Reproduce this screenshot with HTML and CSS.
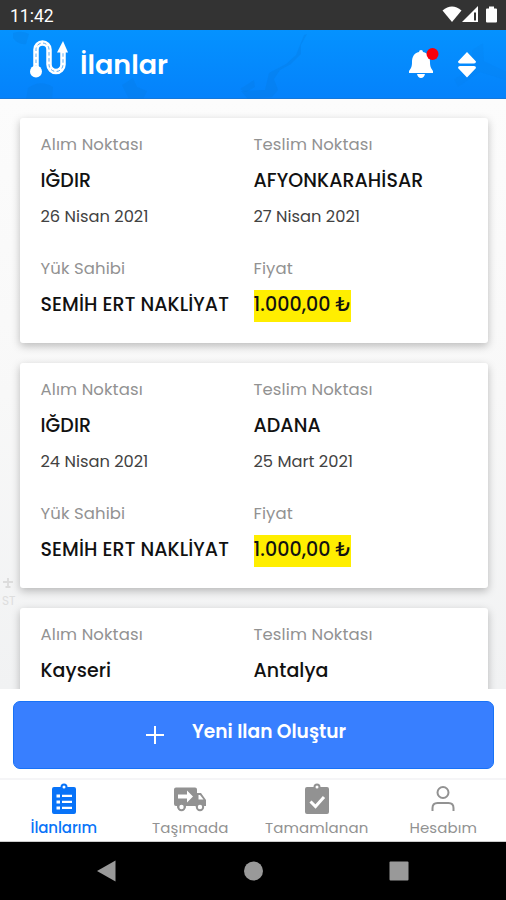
FILE: index.html
```html
<!DOCTYPE html>
<html lang="tr">
<head>
<meta charset="utf-8">
<title>İlanlar</title>
<link rel="stylesheet" href="styles.css">
</head>
<body>
<div class="app">
  <div class="status">
    <span class="clock">11:42</span>
    <svg class="status-icons" width="58" height="20" viewBox="0 0 58 20" fill="#fff">
      <path d="M0.500 5.500Q10 -2.500 19.500 5.500L10 17Z"/>
      <path fill-rule="evenodd" d="M20 17L36 1V17ZM32 7.500V15.500H34V7.500Z"/>
      <path d="M45 3.500h2V1.500h5v2h2q1 0 1 1V16.500q0 1-1 1H45q-1 0-1-1V4.500q0-1 1-1Z"/>
    </svg>
  </div>
  <header class="header">
    <svg class="header-map" width="506" height="69" viewBox="0 0 506 69" fill="#0878dc" stroke="none">
      <path opacity=".25" d="M13 3Q22 0 29 4L26 14Q18 15 13 8ZM28 58Q40 49 53 57L52 69H26ZM122 55L133 48L137 57L147 61L143 69H129ZM240 59L254 50L255 57L246 62Z"/>
      <path opacity=".28" d="M304 5L307 4L301 15V24L291 34L280 40L274 49L278 60L272 67L248 69L241 61L265 60L269 43L286 34L296 25Z"/>
      <path opacity=".1" d="M472 20L483 13L484 31L506 42V50L480 42L458 57L454 49L472 39Z"/>
    </svg>
    <svg class="logo" width="40" height="40" viewBox="0 0 40 40" fill="none">
      <path d="M7 31V11.500A6.500 6.500 0 0 1 20 11.500V26.500A6.500 6.500 0 0 0 34 26.500V13" stroke="#fff" stroke-width="5.500"/>
      <path d="M7 31V11.500A6.500 6.500 0 0 1 20 11.500V26.500A6.500 6.500 0 0 0 34 26.500V13" stroke="#4aa4f5" stroke-width=".9" stroke-dasharray="3.500 2.500"/>
      <circle cx="7" cy="33.500" r="6" fill="#fff"/>
      <path d="M34 3L39 14.500H28Z" fill="#fff"/>
    </svg>
    <h1 class="title">İlanlar</h1>
    <svg class="bell" width="30" height="32" viewBox="0 0 30 32">
      <path fill="#fff" d="M12 1a2 2 0 0 1 2 2c5 1 7 5 7 10 0 5 1 6 3 9v2H0v-2c2-3 3-4 3-9 0-5 2-9 7-10a2 2 0 0 1 2-2ZM8 25h8q-1 4-4 4t-4-4Z"/>
      <circle cx="23.500" cy="5" r="6" fill="#f8000a"/>
    </svg>
    <svg class="sort" width="18" height="26" viewBox="0 0 18 26" fill="#fff">
      <path d="M9 0L18 9.500Q18 11.500 16 11.500H2Q0 11.500 0 9.500ZM9 25.500L0 16Q0 14 2 14H16Q18 14 18 16Z"/>
    </svg>
  </header>
  <main class="list">
    <article class="card">
      <section class="cell"><p class="label">Alım Noktası</p><p class="value">IĞDIR</p><p class="date">26 Nisan 2021</p></section>
      <section class="cell"><p class="label">Teslim Noktası</p><p class="value">AFYONKARAHİSAR</p><p class="date">27 Nisan 2021</p></section>
      <section class="cell"><p class="label">Yük Sahibi</p><p class="value">SEMİH ERT NAKLİYAT</p></section>
      <section class="cell"><p class="label">Fiyat</p><p class="value price">1.000,00 ₺</p></section>
    </article>
    <article class="card">
      <section class="cell"><p class="label">Alım Noktası</p><p class="value">IĞDIR</p><p class="date">24 Nisan 2021</p></section>
      <section class="cell"><p class="label">Teslim Noktası</p><p class="value">ADANA</p><p class="date">25 Mart 2021</p></section>
      <section class="cell"><p class="label">Yük Sahibi</p><p class="value">SEMİH ERT NAKLİYAT</p></section>
      <section class="cell"><p class="label">Fiyat</p><p class="value price">1.000,00 ₺</p></section>
    </article>
    <article class="card">
      <section class="cell"><p class="label">Alım Noktası</p><p class="value">Kayseri</p></section>
      <section class="cell"><p class="label">Teslim Noktası</p><p class="value">Antalya</p></section>
    </article>
    <div class="map-label"><svg width="12" height="12" viewBox="0 0 12 12"><path d="M6 1V10M1 5H11M3.500 10H8.500" stroke="#dcdcdc" stroke-width="1.800"/></svg><br>ST</div>
  </main>
  <div class="action">
    <button class="create">
      <svg width="18" height="18" viewBox="0 0 18 18" stroke="#fff" stroke-width="2"><path d="M9 0V18M0 9H18"/></svg>
      <span>Yeni Ilan Oluştur</span>
    </button>
  </div>
  <nav class="tabs">
    <a class="tab active">
      <svg width="24" height="32" viewBox="0 0 24 32"><path fill="currentColor" fill-rule="evenodd" d="M2 4H8.500A3.500 3.500 0 0 1 15.500 4H22Q24 4 24 6V29Q24 31 22 31H2Q0 31 0 29V6Q0 4 2 4ZM12 2.500A1.500 1.500 0 1 0 12 5.500A1.500 1.500 0 1 0 12 2.500ZM4.500 11.500V14.500H8V11.500ZM10 11.700V14H20V11.700ZM4.500 17.500V20.500H8V17.500ZM10 17.700V20H20V17.700ZM4.500 23.500V26.500H8V23.500ZM10 23.700V26H20V23.700Z"/></svg>
      <span>İlanlarım</span>
    </a>
    <a class="tab">
      <svg width="32" height="32" viewBox="0 0 32 32"><path fill="currentColor" fill-rule="evenodd" d="M2 4.500H21Q23 4.500 23 6.500V10H27L32 17V23H30A4.500 4.500 0 0 1 21.500 23H12A4.500 4.500 0 0 1 3 23H2Q0 23 0 21V6.500Q0 4.500 2 4.500ZM4 11.500V15.500H13V19.500L19 13.500L13 7.500V11.500ZM24.500 12V16.500H29.500L26 12Z"/><circle cx="7.500" cy="24" r="3.200" fill="#fff" stroke="currentColor" stroke-width="2"/><circle cx="26" cy="24" r="3.200" fill="#fff" stroke="currentColor" stroke-width="2"/></svg>
      <span>Taşımada</span>
    </a>
    <a class="tab">
      <svg width="24" height="32" viewBox="0 0 24 32"><path fill="currentColor" fill-rule="evenodd" d="M2 4H8.500A3.500 3.500 0 0 1 15.500 4H22Q24 4 24 6V29Q24 31 22 31H2Q0 31 0 29V6Q0 4 2 4ZM12 2.500A1.500 1.500 0 1 0 12 5.500A1.500 1.500 0 1 0 12 2.500Z"/><path d="M5.500 18.500L10.500 23.500L19 14" fill="none" stroke="#fff" stroke-width="3"/></svg>
      <span>Tamamlanan</span>
    </a>
    <a class="tab">
      <svg width="24" height="32" viewBox="0 0 24 32" fill="none" stroke="currentColor" stroke-width="2"><circle cx="12" cy="9.500" r="5.500"/><path d="M1.500 28V25Q1.500 20 6.500 20H17.500Q22.500 20 22.500 25V28"/></svg>
      <span>Hesabım</span>
    </a>
  </nav>
  <div class="system">
    <svg width="20" height="22" viewBox="0 0 20 22"><path fill="#999" d="M0 11L18.500 .5V21.500Z"/></svg>
    <svg width="20" height="22" viewBox="0 0 20 22"><circle cx="10.500" cy="11" r="9.500" fill="#999"/></svg>
    <svg width="20" height="22" viewBox="0 0 20 22"><rect x=".5" y="1.500" width="19" height="19" rx="1" fill="#999"/></svg>
  </div>
</div>
</body>
</html>
```
FILE: styles.css
```css
* { box-sizing: border-box; margin: 0; padding: 0; }
body { font-family: Poppins, Inter, "Noto Sans", sans-serif; background: #fff; }
.app { width: 506px; height: 900px; display: flex; flex-direction: column; overflow: hidden; }
.app > * { flex-shrink: 0; }
.status { height: 30px; background: #333; display: flex; justify-content: space-between; align-items: center; padding: 2px 6px 0 10px; }
.status-icons { margin-top: -2px; }
.clock { font: 400 17.500px/30px Roboto, sans-serif; color: #fff; }
.header { height: 69px; background: linear-gradient(#0592ff, #0582fb); display: flex; position: relative; border-bottom: 1px solid #1478dc; }
.header-map { position: absolute; left: 0; top: 0; }
.logo { position: relative; margin: 8px 0 0 29px; }
.title { position: relative; margin-left: 11px; font-size: 27px; line-height: 69px; font-weight: 600; color: #fff; }
.bell { position: relative; margin: 19px 19px 0 auto; overflow: visible; }
.sort { position: relative; margin: 22px 30px 0 0; }
.list { height: 590px; overflow: hidden; position: relative; padding: 19px 18.500px 0 19.500px; display: flex; flex-direction: column; gap: 20px; background: linear-gradient(#fcfcfc, #f8f8f8 50%, #f1f2f3); }
.card { position: relative; flex: none; height: 225px; padding: 10px 20px 0 21px; background: #fff; border-radius: 3px; box-shadow: 0 3px 9px rgba(0,0,0,.25); display: grid; grid-template-columns: 213px 1fr; grid-template-rows: 124px 1fr; }
.cell { white-space: nowrap; }
.label { height: 32px; line-height: 34px; font-size: 16.500px; color: #929292; letter-spacing: .1px; }
.value { height: 40px; line-height: 41px; font-size: 19px; font-weight: 500; color: #111; letter-spacing: .08px; }
.date { height: 32px; line-height: 33px; font-size: 16.300px; color: #424242; }
.price { width: 97.500px; height: 32px; line-height: 29px; margin-top: 6px; background: #ffee00; }
.map-label { position: absolute; left: 2px; top: 478px; font-size: 12px; line-height: 16px; color: #dedede; }
.action { height: 91px; padding: 12px 12px 0 13px; background: #fff; border-bottom: 2px solid #f5f5f7; }
.create { width: 481px; height: 68px; border: 1px solid #1872f7; border-radius: 7px; background: #387fff; display: flex; color: #fff; font: inherit; font-size: 18.600px; font-weight: 600; }
.create svg { margin: 24px 28px 0 132px; }
.create span { line-height: 60px; white-space: nowrap; }
.tabs { height: 62px; background: #fff; display: grid; grid-template-columns: repeat(4, 126.500px); padding-left: .500px; border-bottom: 1px solid #ccc; }
.tab { display: flex; flex-direction: column; align-items: center; padding-top: 3px; color: #929292; font-size: 15px; line-height: 25px; white-space: nowrap; letter-spacing: .1px; }
.active { color: #0873f8; font-weight: 500; letter-spacing: -.1px; }
.system { height: 58px; background: #000; display: flex; gap: 126px; padding: 18px 0 0 97px; }
```
